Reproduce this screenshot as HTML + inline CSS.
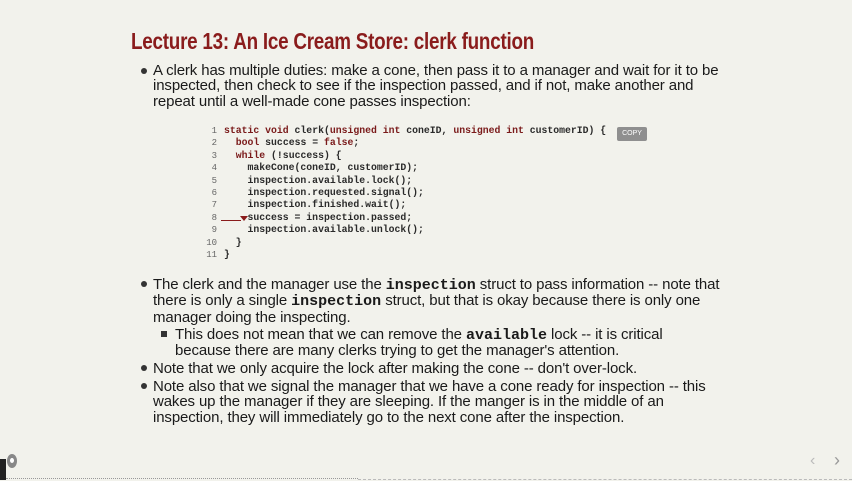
<!DOCTYPE html>
<html><head><meta charset="utf-8"><style>
body{margin:0;width:852px;height:480px;background:#f2f2ec;position:relative;overflow:hidden;font-family:"Liberation Sans",sans-serif;color:#1a1a1a}
.t{position:absolute;left:131px;top:28px;font-family:"Liberation Sans Narrow","Liberation Sans",sans-serif;font-weight:bold;font-size:23px;color:#8a1c1c;letter-spacing:-0.3px;transform:scaleX(0.82);transform-origin:left;white-space:nowrap}
.p{position:absolute;font-size:15px;line-height:15.3px;white-space:nowrap;letter-spacing:-0.12px}
.b{position:absolute;width:6px;height:6px;border-radius:50%;background:#333}
.sq{position:absolute;width:6px;height:6px;background:#333}
.code{position:absolute;left:224px;top:125px;font-family:"Liberation Mono",monospace;font-size:9.8px;line-height:12.4px;white-space:pre;font-weight:bold;color:#2a2a2a}
.ln{position:absolute;left:200px;top:125px;width:17px;text-align:right;font-family:"Liberation Mono",monospace;font-size:9px;line-height:12.4px;white-space:pre;color:#666}
.k{color:#7a1a1a}
code{font-family:"Liberation Mono",monospace;font-weight:bold;font-size:15px;letter-spacing:0}
.copy{position:absolute;left:617px;top:127px;width:30px;height:14px;background:#8f8f8f;color:#fff;font-size:7px;text-align:center;line-height:14px;border-radius:2px}
</style></head><body>
<div class="t">Lecture 13: An Ice Cream Store: clerk function</div>
<div class="b" style="left:141px;top:68px"></div>
<div class="p" style="left:153px;top:63px">A clerk has multiple duties: make a cone, then pass it to a manager and wait for it to be<br>inspected, then check to see if the inspection passed, and if not, make another and<br>repeat until a well-made cone passes inspection:</div>
<div class="ln">1
2
3
4
5
6
7
8
9
10
11</div>
<div class="code"><span class="k">static void</span> clerk(<span class="k">unsigned int</span> coneID, <span class="k">unsigned int</span> customerID) {
  <span class="k">bool</span> success = <span class="k">false</span>;
  <span class="k">while</span> (!success) {
    makeCone(coneID, customerID);
    inspection.available.lock();
    inspection.requested.signal();
    inspection.finished.wait();
    success = inspection.passed;
    inspection.available.unlock();
  }
}</div>
<div style="position:absolute;left:221px;top:220px;width:20px;height:1px;background:#8a1c1c"></div>
<div style="position:absolute;left:240px;top:216px;width:0;height:0;border-left:4px solid transparent;border-right:4px solid transparent;border-top:5px solid #8a1c1c"></div>
<div class="copy">COPY</div>
<div class="b" style="left:141px;top:281px"></div>
<div class="p" style="left:153px;top:277px">The clerk and the manager use the <code>inspection</code> struct to pass information -- note that<br>there is only a single <code>inspection</code> struct, but that is okay because there is only one<br>manager doing the inspecting.</div>
<div class="sq" style="left:161px;top:331px"></div>
<div class="p" style="left:175px;top:327px">This does not mean that we can remove the <code>available</code> lock -- it is critical<br>because there are many clerks trying to get the manager's attention.</div>
<div class="b" style="left:141px;top:365px"></div>
<div class="p" style="left:153px;top:361px">Note that we only acquire the lock after making the cone -- don't over-lock.</div>
<div class="b" style="left:141px;top:383px"></div>
<div class="p" style="left:153px;top:379px">Note also that we signal the manager that we have a cone ready for inspection -- this<br>wakes up the manager if they are sleeping. If the manger is in the middle of an<br>inspection, they will immediately go to the next cone after the inspection.</div>
<div style="position:absolute;left:0;top:459px;width:6px;height:21px;background:#222"></div>
<div style="position:absolute;left:7px;top:454px;width:10px;height:14px;border-radius:50%;background:#888"></div>
<div style="position:absolute;left:10px;top:458px;width:4px;height:5px;border-radius:50%;background:#fff"></div>
<div style="position:absolute;left:6px;top:478px;width:352px;height:1px;border-top:1px dotted #999"></div>
<div style="position:absolute;left:358px;top:479px;width:494px;height:1px;border-top:1px dashed #bbb"></div>
<div style="position:absolute;left:810px;top:452px;font-size:16px;color:#bbb">‹</div>
<div style="position:absolute;left:834px;top:450px;font-size:18px;color:#999">›</div>
</body></html>
